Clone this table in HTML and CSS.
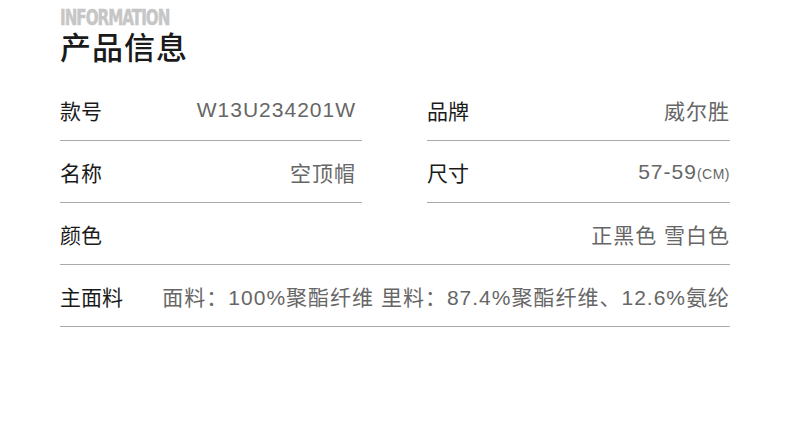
FILE: index.html
```html
<!DOCTYPE html>
<html lang="zh-CN">
<head>
    <meta charset="UTF-8">
    <meta name="viewport" content="width=device-width, initial-scale=1.0">
    <title>产品信息</title>
    <link rel="stylesheet" href="styles.css">
</head>
<body>
    <div class="info">
        <div class="info-head">
            <div class="info-en">INFORMATION</div>
            <h1 class="info-title">产品信息</h1>
        </div>

        <div class="info-grid">
            <div class="info-row left">
                <span class="label">款号</span>
                <span class="value">W13U234201W</span>
            </div>
            <div class="info-row">
                <span class="label">品牌</span>
                <span class="value">威尔胜</span>
            </div>
            <div class="info-row left">
                <span class="label">名称</span>
                <span class="value">空顶帽</span>
            </div>
            <div class="info-row">
                <span class="label">尺寸</span>
                <span class="value">57-59<small class="unit">(CM)</small></span>
            </div>
            <div class="info-row wide">
                <span class="label">颜色</span>
                <span class="value">正黑色 雪白色</span>
            </div>
            <div class="info-row wide">
                <span class="label">主面料</span>
                <span class="value">面料：100%聚酯纤维 里料：87.4%聚酯纤维、12.6%氨纶</span>
            </div>
        </div>
    </div>
</body>
</html>
```

FILE: styles.css
```css
/* Product information block */
body {
    margin: 0;
    padding: 0;
    background-color: #ffffff;
    font-family: "Liberation Sans", "Noto Sans CJK SC", sans-serif;
}

.info {
    width: 670px;
    padding: 8px 0 0 60px;
}

.info-head {
    height: 71px;
}

.info-en {
    font-family: "DejaVu Sans Condensed", "DejaVu Sans", sans-serif;
    font-weight: bold;
    font-size: 21px;
    line-height: 21px;
    color: #c6c6c6;
    letter-spacing: -1.2px;
    transform: scaleX(0.8);
    transform-origin: left center;
    -webkit-text-stroke: 0.5px #c6c6c6;
}

.info-title {
    margin: 0;
    font-family: "Noto Sans CJK SC", sans-serif;
    font-size: 31px;
    font-weight: 500;
    line-height: 33px;
    letter-spacing: 1px;
    color: #1a1a1a;
}

.info-grid {
    display: grid;
    grid-template-columns: 302px 303px;
    column-gap: 65px;
}

.info-row {
    height: 61px;
    display: flex;
    align-items: center;
    justify-content: space-between;
    border-bottom: 1px solid #aaaaaa;
}

.info-row.wide {
    grid-column: 1 / 3;
}

.info-row.left .value {
    margin-right: 6px;
}

.label {
    font-family: "Noto Sans CJK SC", sans-serif;
    font-size: 21px;
    color: #1a1a1a;
}

.value {
    font-size: 21px;
    letter-spacing: 1px;
    color: #666666;
}

.unit {
    font-size: 14px;
    letter-spacing: 0.5px;
}
```
